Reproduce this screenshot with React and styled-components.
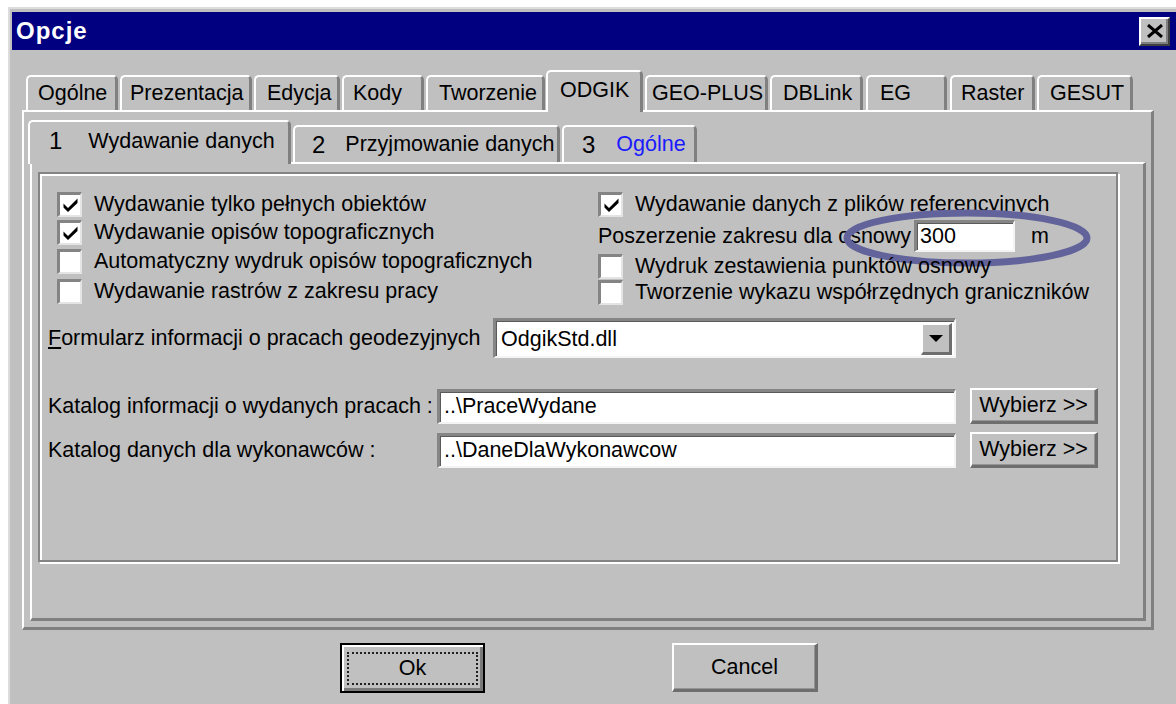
import React from 'react';
import styled, { createGlobalStyle, css } from 'styled-components';

const GlobalStyle = createGlobalStyle`
  html, body {
    margin: 0;
    padding: 0;
    background: #ffffff;
    overflow: hidden;
  }
  body {
    font-family: "Liberation Sans", Arial, sans-serif;
    font-size: 21.5px;
    color: #000000;
  }
`;

const Window = styled.div`
  box-sizing: border-box;
  margin: 7px 0 0 8px;
  width: 1168px;
  height: 697px;
  background: #c0c0c0;
  border-top: 2px solid #dcdcdc;
  border-left: 2px solid #dcdcdc;
  padding: 3px 0 0 2px;
`;

const TitleBar = styled.div`
  height: 38px;
  background: #000080;
  display: flex;
  align-items: center;
  justify-content: space-between;
  padding: 0 6px 0 4px;
`;

const Title = styled.span`
  color: #ffffff;
  font-weight: bold;
  font-size: 24px;
  letter-spacing: 1px;
`;

const CloseButton = styled.div`
  box-sizing: border-box;
  width: 31px;
  height: 29px;
  background: #c0c0c0;
  border-style: solid;
  border-width: 2px;
  border-color: #ffffff #404040 #404040 #ffffff;
  box-shadow: inset -2px -2px 0 #808080;
  display: flex;
  align-items: center;
  justify-content: center;
`;

const Body = styled.div`
  padding: 20px 0 0 10px;
`;

const TabRow = styled.div`
  position: relative;
  z-index: 2;
  display: flex;
  align-items: flex-end;
  height: ${(p) => p.$h}px;
  padding-left: ${(p) => p.$pad}px;
`;

const Tab = styled.div`
  box-sizing: border-box;
  width: ${(p) => p.$w}px;
  height: ${(p) => p.$h}px;
  margin-left: ${(p) => p.$ml}px;
  padding-left: ${(p) => p.$pl}px;
  background: #c0c0c0;
  border: 2px solid #ffffff;
  border-right: 3px solid #808080;
  border-bottom: none;
  border-radius: 5px 5px 0 0;
  display: flex;
  align-items: center;
  white-space: nowrap;
  overflow: hidden;
  ${(p) =>
    p.$active &&
    css`
      margin-bottom: -2px;
      padding-bottom: 4px;
    `}
`;

const Num = styled.span`
  font-size: 24px;
  margin-right: ${(p) => p.$gap}px;
`;

const TabLabel = styled.span`
  color: ${(p) => (p.$blue ? '#1a1aff' : '#000000')};
`;

const Panel = styled.div`
  box-sizing: border-box;
  width: ${(p) => p.$w}px;
  height: ${(p) => p.$h}px;
  border-top: 2px solid #ffffff;
  border-left: 2px solid #ffffff;
  border-right: 3px solid #808080;
  border-bottom: 3px solid #808080;
  padding: ${(p) => p.$pad};
`;

const Frame = styled.div`
  box-sizing: border-box;
  width: 1080px;
  height: 390px;
  border: 2px solid #848484;
  box-shadow: inset 2px 2px 0 #ffffff, 2px 2px 0 #ffffff;
  padding: 16px 0 0 8px;
`;

const Options = styled.div`
  display: flex;
  margin-left: 9px;
`;

const Column = styled.div`
  display: flex;
  flex-direction: column;
  width: ${(p) => p.$w}px;
`;

const OptionRow = styled.div`
  position: relative;
  display: flex;
  align-items: center;
  gap: ${(p) => p.$gap ?? 12}px;
  height: ${(p) => p.$h}px;
  white-space: nowrap;
`;

const Box = styled.span`
  box-sizing: border-box;
  flex: none;
  width: 25px;
  height: 25px;
  background: #ffffff;
  border-style: solid;
  border-width: 3px 2px 2px 3px;
  border-color: #848484 #e4e4e4 #e4e4e4 #848484;
  display: flex;
  align-items: center;
  justify-content: center;
`;

const Field = styled.div`
  box-sizing: border-box;
  flex: none;
  width: ${(p) => p.$w}px;
  height: ${(p) => p.$h}px;
  background: #ffffff;
  border-style: solid;
  border-width: 3px 2px 2px 3px;
  border-color: #858585 #f4f4f4 #f4f4f4 #858585;
  box-shadow: inset 1px 1px 0 #5a5a5a;
  display: flex;
  align-items: center;
  padding-left: ${(p) => p.$pl ?? 4}px;
  white-space: nowrap;
`;

const Unit = styled.span`
  margin-left: 13px;
`;

const Ring = styled.svg`
  position: absolute;
  left: 245px;
  top: -9px;
  pointer-events: none;
`;

const FormRow = styled.div`
  display: flex;
  align-items: center;
  margin-top: ${(p) => p.$mt}px;
  white-space: nowrap;
`;

const RowLabel = styled.span`
  width: ${(p) => p.$w}px;
  flex: none;
`;

const Combo = styled.div`
  box-sizing: border-box;
  width: 463px;
  height: 40px;
  background: #ffffff;
  border-style: solid;
  border-width: 3px 2px 2px 3px;
  border-color: #858585 #f4f4f4 #f4f4f4 #858585;
  box-shadow: inset 1px 1px 0 #5a5a5a;
  display: flex;
  align-items: stretch;
  padding: 2px 2px 1px 0;
`;

const ComboText = styled.span`
  flex: 1;
  display: flex;
  align-items: center;
  padding-left: 5px;
`;

const ComboButton = styled.span`
  box-sizing: border-box;
  width: 31px;
  background: #c0c0c0;
  border-style: solid;
  border-width: 2px 3px 3px 2px;
  border-color: #ffffff #6e6e6e #6e6e6e #ffffff;
  display: flex;
  align-items: center;
  justify-content: center;
`;

const PushButton = styled.div`
  box-sizing: border-box;
  width: ${(p) => p.$w}px;
  height: ${(p) => p.$h}px;
  margin-left: ${(p) => p.$ml}px;
  background: #c0c0c0;
  border-style: solid;
  border-width: 2px 3px 3px 2px;
  border-color: #ffffff #6e6e6e #6e6e6e #ffffff;
  box-shadow: inset -1px -1px 0 #959595;
  display: flex;
  align-items: center;
  justify-content: center;
  white-space: nowrap;
`;

const ButtonBar = styled.div`
  display: flex;
  margin-top: 13px;
  padding-left: 318px;
`;

const DefaultButton = styled.div`
  box-sizing: border-box;
  width: 145px;
  height: 50px;
  background: #c0c0c0;
  border: 2px solid #000000;
  box-shadow: inset 2px 2px 0 #ffffff, inset -3px -3px 0 #7a7a7a;
  padding: 7px 5px 6px 5px;
  display: flex;
`;

const FocusRing = styled.span`
  flex: 1;
  border: 2px dotted #202020;
  display: flex;
  align-items: center;
  justify-content: center;
`;

const outerTabs = [
  { label: 'Ogólne', w: 92, ml: 0, pl: 10 },
  { label: 'Prezentacja', w: 132, ml: 2, pl: 8 },
  { label: 'Edycja', w: 86, ml: 2, pl: 11 },
  { label: 'Kody', w: 82, ml: 2, pl: 9 },
  { label: 'Tworzenie', w: 119, ml: 2, pl: 11 },
  { label: 'ODGIK', w: 97, ml: 1, pl: 12, active: true },
  { label: 'GEO-PLUS', w: 123, ml: 2, pl: 5 },
  { label: 'DBLink', w: 93, ml: 2, pl: 11 },
  { label: 'EG', w: 81, ml: 3, pl: 12 },
  { label: 'Raster', w: 85, ml: 3, pl: 9 },
  { label: 'GESUT', w: 96, ml: 2, pl: 11 },
];

const innerTabs = [
  { num: '1', label: 'Wydawanie danych', w: 263, ml: -2, pl: 19, gap: 26, active: true },
  { num: '2', label: 'Przyjmowanie danych', w: 267, ml: 2, pl: 17, gap: 20 },
  { num: '3', label: 'Ogólne', w: 135, ml: 2, pl: 18, gap: 21, blue: true },
];

const Check = () => (
  <svg width="15" height="14" viewBox="0 0 15 14">
    <path d="M0.5 5.5 L5 10 L14.5 0.5 L14.5 5 L5 14 L0.5 9.5 Z" fill="#000" />
  </svg>
);

const Option = ({ checked, h, children }) => (
  <OptionRow $h={h}>
    <Box>{checked && <Check />}</Box>
    <span>{children}</span>
  </OptionRow>
);

const App = () => (
  <>
    <GlobalStyle />
    <Window>
      <TitleBar>
        <Title>Opcje</Title>
        <CloseButton>
          <svg width="18" height="14" viewBox="0 0 18 14">
            <path d="M2 1 L16 13 M16 1 L2 13" stroke="#000" strokeWidth="3" />
          </svg>
        </CloseButton>
      </TitleBar>

      <Body>
        <TabRow $h={40} $pad={4}>
          {outerTabs.map((t) => (
            <Tab
              key={t.label}
              $w={t.w}
              $ml={t.ml}
              $pl={t.pl}
              $h={t.active ? 42 : 35}
              $active={t.active}
            >
              {t.label}
            </Tab>
          ))}
        </TabRow>

        <Panel $w={1132} $h={520} $pad="8px 6px 6px 6px">
          <TabRow $h={42} $pad={0}>
            {innerTabs.map((t) => (
              <Tab
                key={t.num}
                $w={t.w}
                $ml={t.ml}
                $pl={t.pl}
                $h={t.active ? 44 : 37}
                $active={t.active}
              >
                <Num $gap={t.gap}>{t.num}</Num>
                <TabLabel $blue={t.blue}>{t.label}</TabLabel>
              </Tab>
            ))}
          </TabRow>

          <Panel $w={1116} $h={459} $pad="8px 0 0 6px">
            <Frame>
              <Options>
                <Column $w={541}>
                  <Option checked h={28}>Wydawanie tylko pełnych obiektów</Option>
                  <Option checked h={28}>Wydawanie opisów topograficznych</Option>
                  <Option h={30}>Automatyczny wydruk opisów topograficznych</Option>
                  <Option h={30}>Wydawanie rastrów z zakresu pracy</Option>
                </Column>
                <Column $w={480}>
                  <Option checked h={28}>Wydawanie danych z plików  referencyjnych</Option>
                  <OptionRow $h={36} $gap={3}>
                    <span>Poszerzenie zakresu dla osnowy</span>
                    <Field $w={101} $h={32} $pl={3}>300</Field>
                    <Unit>m</Unit>
                    <Ring width="248" height="58" viewBox="0 0 248 58">
                      <ellipse cx="124" cy="29" rx="120" ry="25" fill="none" stroke="#63639b" strokeWidth="7" />
                    </Ring>
                  </OptionRow>
                  <Option h={24}>Wydruk zestawienia punktów osnowy</Option>
                  <Option h={28}>Tworzenie wykazu współrzędnych graniczników</Option>
                </Column>
              </Options>

              <FormRow $mt={12}>
                <RowLabel $w={445}>
                  <u>F</u>ormularz informacji o pracach geodezyjnych
                </RowLabel>
                <Combo>
                  <ComboText>OdgikStd.dll</ComboText>
                  <ComboButton>
                    <svg width="14" height="7" viewBox="0 0 14 7">
                      <path d="M0 0 L14 0 L7 7 Z" fill="#000" />
                    </svg>
                  </ComboButton>
                </Combo>
              </FormRow>

              <FormRow $mt={30}>
                <RowLabel $w={389}>Katalog informacji o wydanych pracach :</RowLabel>
                <Field $w={519} $h={35}>..\PraceWydane</Field>
                <PushButton $w={128} $h={36} $ml={14}>Wybierz &gt;&gt;</PushButton>
              </FormRow>
              <FormRow $mt={8}>
                <RowLabel $w={389}>Katalog danych dla wykonawców :</RowLabel>
                <Field $w={519} $h={35}>..\DaneDlaWykonawcow</Field>
                <PushButton $w={128} $h={36} $ml={14}>Wybierz &gt;&gt;</PushButton>
              </FormRow>
            </Frame>
          </Panel>
        </Panel>

        <ButtonBar>
          <DefaultButton>
            <FocusRing>Ok</FocusRing>
          </DefaultButton>
          <PushButton $w={146} $h={49} $ml={187}>Cancel</PushButton>
        </ButtonBar>
      </Body>
    </Window>
  </>
);

export default App;
